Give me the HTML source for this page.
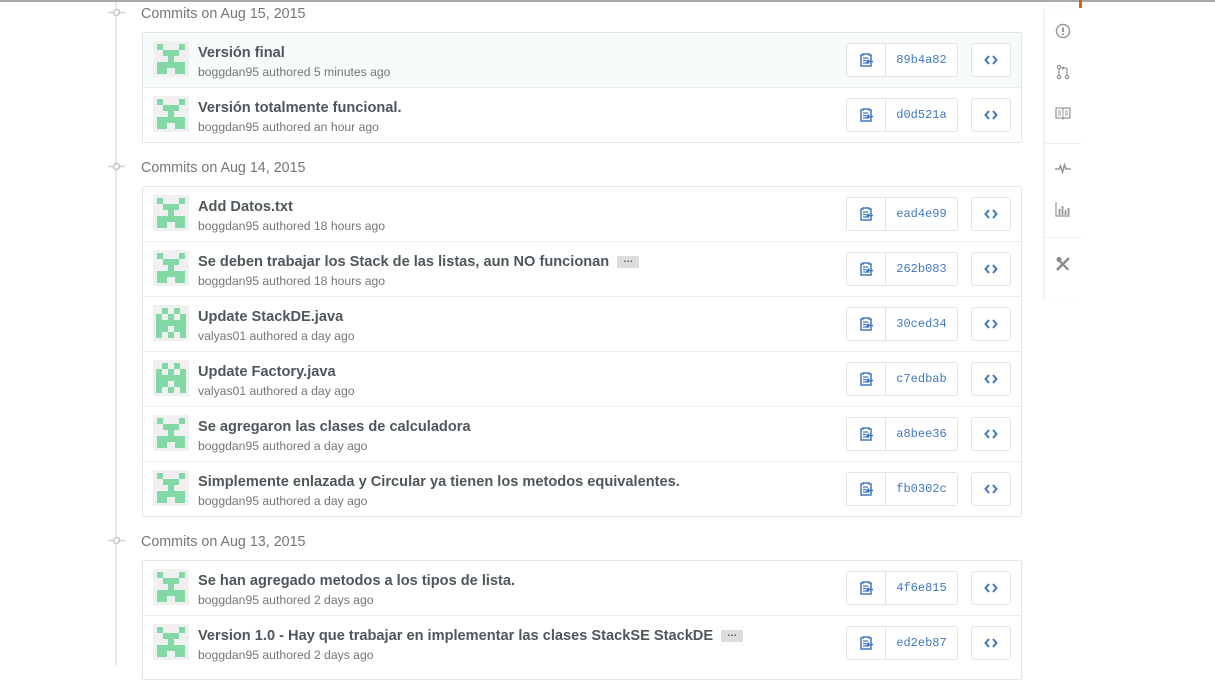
<!DOCTYPE html>
<html><head><meta charset="utf-8">
<style>
*{box-sizing:border-box;margin:0;padding:0}
body{width:1215px;height:665px;overflow:hidden;background:#fff;font-family:"Liberation Sans",Arial,sans-serif;position:relative}
.topl{position:absolute;left:0;top:0;width:1215px;height:2px;background:#aaa}
.line{position:absolute;left:115px;top:0;width:2px;height:665px;background:#e8e8e8}
.node{position:absolute;left:108px;width:17px;height:9px}
.date{position:absolute;left:141px;font-size:14.3px;color:#767676}
.box{position:absolute;left:142px;width:880px;border:1px solid #e5e5e5;border-radius:2px;background:#fff}
.row{position:relative;height:55px;border-top:1px solid #eee}
.row:first-child{border-top:none;height:54px}
.row.hl{background:#f7fbfc}
.av{position:absolute;left:10px;top:8px;width:36px;height:36px}
.t{position:absolute;left:55px;top:12px;font-size:14.6px;font-weight:bold;color:#4e575b;white-space:nowrap}
.m{position:absolute;left:55px;top:32px;font-size:12.2px;color:#767676;white-space:nowrap}
.ell{display:inline-block;vertical-align:middle;margin-left:8px;width:22px;height:12px;background:#ddd;border-radius:1px;font-size:10px;line-height:8px;text-align:center;color:#555;font-weight:bold}
.bg{position:absolute;left:703px;top:10px;height:34px;width:112px;border:1px solid #e1e4e6;border-radius:3px;background:#fff;display:flex}
.bg .c{width:39px;border-right:1px solid #e1e4e6;display:flex;align-items:center;justify-content:center}
.bg .s{flex:1;display:flex;align-items:center;justify-content:center;font-family:"Liberation Mono",monospace;font-size:12px;color:#4078c0}
.br{position:absolute;left:828px;top:10px;height:34px;width:40px;border:1px solid #e1e4e6;border-radius:3px;background:#fff;display:flex;align-items:center;justify-content:center}
.side{position:absolute;left:1044px;top:9px;width:36px;height:292px;border-left:1px solid #ececec;box-shadow:-1px 0 2px rgba(0,0,0,.04)}
.side svg{position:absolute;left:10px}
.sep{position:absolute;left:0;width:36px;height:1px;background:#eee}
</style></head><body>
<svg width="0" height="0" style="position:absolute">
<defs>
<symbol id="a1" viewBox="0 0 36 36"><rect width="36" height="36" fill="#f0f0f0"/><g fill="#82d9a6"><rect x="4" y="3" width="6" height="6"/><rect x="26" y="3" width="6" height="6"/><rect x="10" y="9" width="16" height="6"/><rect x="15" y="15" width="6" height="6"/><rect x="4" y="21" width="28" height="6"/><rect x="4" y="27" width="10" height="6"/><rect x="22" y="27" width="10" height="6"/></g></symbol>
<symbol id="a2" viewBox="0 0 36 36"><rect width="36" height="36" fill="#f0f0f0"/><g fill="#82d9a6"><rect x="9" y="3" width="6" height="6"/><rect x="21" y="3" width="6" height="6"/><rect x="3" y="9" width="6" height="6"/><rect x="15" y="9" width="6" height="6"/><rect x="27" y="9" width="6" height="6"/><rect x="3" y="15" width="30" height="6"/><rect x="9" y="21" width="6" height="6"/><rect x="21" y="21" width="6" height="6"/><rect x="3" y="21" width="6" height="6"/><rect x="27" y="21" width="6" height="6"/><rect x="15" y="27" width="6" height="6"/><rect x="3" y="27" width="6" height="6"/><rect x="27" y="27" width="6" height="6"/></g></symbol>
<symbol id="clip" viewBox="0 0 16 16"><path d="M3 3h2V2h6v1h2v11H3z" fill="none" stroke="#4078c0" stroke-width="1.5"/><path d="M5 6h5M5 8.5h3M5 11h5" stroke="#4078c0" stroke-width="1.3"/><path d="M9 9.5h6M11 7.5l-2 2 2 2" fill="none" stroke="#4078c0" stroke-width="1.5"/></symbol>
<symbol id="code" viewBox="0 0 16 16"><path d="M6 4L2.5 8 6 12M10 4l3.5 4L10 12" fill="none" stroke="#4078c0" stroke-width="2"/></symbol>
<symbol id="nd" viewBox="0 0 17 9"><path d="M0 4.5h17" stroke="#d0d0d0" stroke-width="1.5"/><circle cx="8.5" cy="4.5" r="3" fill="#fff" stroke="#c4c4c4" stroke-width="1.5"/></symbol>
</defs></svg>

<div class="line"></div>
<div class="topl"></div>
<div style="position:absolute;left:1079px;top:0;width:3px;height:8px;background:#d26911"></div>

<svg class="node" style="top:8px"><use href="#nd"/></svg>
<div class="date" style="top:6px">Commits on Aug 15, 2015</div>
<div class="box" style="top:32px">
<div class="row hl"><svg class="av"><use href="#a1"/></svg><div class="t">Versión final</div><div class="m">boggdan95 authored 5 minutes ago</div><div class="bg"><div class="c"><svg width="16" height="16"><use href="#clip"/></svg></div><div class="s">89b4a82</div></div><div class="br"><svg width="16" height="16"><use href="#code"/></svg></div></div>
<div class="row"><svg class="av"><use href="#a1"/></svg><div class="t">Versión totalmente funcional.</div><div class="m">boggdan95 authored an hour ago</div><div class="bg"><div class="c"><svg width="16" height="16"><use href="#clip"/></svg></div><div class="s">d0d521a</div></div><div class="br"><svg width="16" height="16"><use href="#code"/></svg></div></div>
</div>

<svg class="node" style="top:162px"><use href="#nd"/></svg>
<div class="date" style="top:160px">Commits on Aug 14, 2015</div>
<div class="box" style="top:186px">
<div class="row"><svg class="av"><use href="#a1"/></svg><div class="t">Add Datos.txt</div><div class="m">boggdan95 authored 18 hours ago</div><div class="bg"><div class="c"><svg width="16" height="16"><use href="#clip"/></svg></div><div class="s">ead4e99</div></div><div class="br"><svg width="16" height="16"><use href="#code"/></svg></div></div>
<div class="row"><svg class="av"><use href="#a1"/></svg><div class="t">Se deben trabajar los Stack de las listas, aun NO funcionan<span class="ell">…</span></div><div class="m">boggdan95 authored 18 hours ago</div><div class="bg"><div class="c"><svg width="16" height="16"><use href="#clip"/></svg></div><div class="s">262b083</div></div><div class="br"><svg width="16" height="16"><use href="#code"/></svg></div></div>
<div class="row"><svg class="av"><use href="#a2"/></svg><div class="t">Update StackDE.java</div><div class="m">valyas01 authored a day ago</div><div class="bg"><div class="c"><svg width="16" height="16"><use href="#clip"/></svg></div><div class="s">30ced34</div></div><div class="br"><svg width="16" height="16"><use href="#code"/></svg></div></div>
<div class="row"><svg class="av"><use href="#a2"/></svg><div class="t">Update Factory.java</div><div class="m">valyas01 authored a day ago</div><div class="bg"><div class="c"><svg width="16" height="16"><use href="#clip"/></svg></div><div class="s">c7edbab</div></div><div class="br"><svg width="16" height="16"><use href="#code"/></svg></div></div>
<div class="row"><svg class="av"><use href="#a1"/></svg><div class="t">Se agregaron las clases de calculadora</div><div class="m">boggdan95 authored a day ago</div><div class="bg"><div class="c"><svg width="16" height="16"><use href="#clip"/></svg></div><div class="s">a8bee36</div></div><div class="br"><svg width="16" height="16"><use href="#code"/></svg></div></div>
<div class="row"><svg class="av"><use href="#a1"/></svg><div class="t">Simplemente enlazada y Circular ya tienen los metodos equivalentes.</div><div class="m">boggdan95 authored a day ago</div><div class="bg"><div class="c"><svg width="16" height="16"><use href="#clip"/></svg></div><div class="s">fb0302c</div></div><div class="br"><svg width="16" height="16"><use href="#code"/></svg></div></div>
</div>

<svg class="node" style="top:536px"><use href="#nd"/></svg>
<div class="date" style="top:534px">Commits on Aug 13, 2015</div>
<div class="box" style="top:560px;height:120px">
<div class="row"><svg class="av"><use href="#a1"/></svg><div class="t">Se han agregado metodos a los tipos de lista.</div><div class="m">boggdan95 authored 2 days ago</div><div class="bg"><div class="c"><svg width="16" height="16"><use href="#clip"/></svg></div><div class="s">4f6e815</div></div><div class="br"><svg width="16" height="16"><use href="#code"/></svg></div></div>
<div class="row"><svg class="av"><use href="#a1"/></svg><div class="t">Version 1.0 - Hay que trabajar en implementar las clases StackSE StackDE<span class="ell">…</span></div><div class="m">boggdan95 authored 2 days ago</div><div class="bg"><div class="c"><svg width="16" height="16"><use href="#clip"/></svg></div><div class="s">ed2eb87</div></div><div class="br"><svg width="16" height="16"><use href="#code"/></svg></div></div>
</div>

<div class="side">
<svg style="top:14px" width="16" height="16" viewBox="0 0 16 16"><circle cx="8" cy="8" r="6.5" fill="none" stroke="#999" stroke-width="1.5"/><path d="M8 4.5v4.5" stroke="#999" stroke-width="2"/><circle cx="8" cy="11.3" r="1.1" fill="#999"/></svg>
<svg style="top:55px" width="16" height="16" viewBox="0 0 16 16"><circle cx="4" cy="3" r="1.6" fill="none" stroke="#999" stroke-width="1.3"/><circle cx="4" cy="13" r="1.6" fill="none" stroke="#999" stroke-width="1.3"/><circle cx="12" cy="13" r="1.6" fill="none" stroke="#999" stroke-width="1.3"/><path d="M4 4.6v6.8M12 11.4V6q0-2-2-2H7M8.5 2.5L7 4l1.5 1.5" fill="none" stroke="#999" stroke-width="1.3"/></svg>
<svg style="top:96px" width="16" height="16" viewBox="0 0 16 16"><path d="M1 3h6l1 1 1-1h6v10H9l-1 1-1-1H1z" fill="none" stroke="#999" stroke-width="1.3"/><path d="M8 4v9M3 6h3M3 8h3M3 10h3M10 6h3M10 8h3M10 10h3" stroke="#999" stroke-width="1"/></svg>
<div class="sep" style="top:134px"></div>
<svg style="top:151px" width="16" height="16" viewBox="0 0 16 16"><path d="M0 9h4l1.5-3 2 6 2-7 1.5 4H16" fill="none" stroke="#999" stroke-width="1.6"/></svg>
<svg style="top:192px" width="16" height="16" viewBox="0 0 16 16"><path d="M1 1v14h14" fill="none" stroke="#999" stroke-width="1.2"/><path d="M4.5 14V8M7.5 14V5M10.5 14V9M13.5 14V7" stroke="#999" stroke-width="1.8"/></svg>
<div class="sep" style="top:228px"></div>
<svg style="top:247px" width="16" height="16" viewBox="0 0 16 16"><path d="M2 14L14 2" stroke="#888" stroke-width="2.5"/><path d="M3 2l11 11-1.5 1.5L1.5 3.5z" fill="#888"/><circle cx="4" cy="3.5" r="2.5" fill="#888"/></svg>
</div>
</body></html>
